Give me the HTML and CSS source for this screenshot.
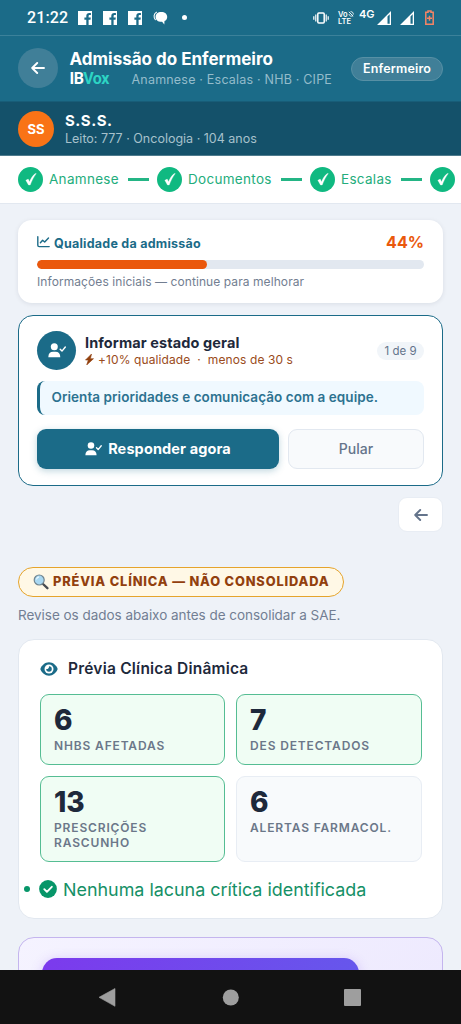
FILE: index.html
```html
<!DOCTYPE html>
<html lang="pt-BR">
<head>
<meta charset="utf-8">
<title>Admissão do Enfermeiro</title>
<link rel="stylesheet" href="styles.css">
</head>
<body>
<svg class="defs" width="0" height="0">
  <symbol id="fb" viewBox="0 0 14 14"><path fill="#fff" fill-rule="evenodd" d="M0 0h14v14h-3.400V8.800h1.900l.3-2.200h-2.200V5.200c0-.7.3-1.100 1.100-1.100h1.200V2.100c-.4 0-.9-.1-1.600-.1C9.400 2 8.300 3.100 8.300 4.900v1.700H6.400v2.200h1.900V14H0z"/></symbol>
  <symbol id="signal" viewBox="0 0 14 14"><path fill="#fff" fill-rule="evenodd" d="M14 0v14H0zM12.700 3.200L10.500 5.500v7.200h2.200z"/></symbol>
  <symbol id="arrow" viewBox="0 0 14 12"><path d="M13 6H1.500M6.200 1L1.200 6l5 5" fill="none" stroke="currentColor" stroke-width="1.900" stroke-linecap="round" stroke-linejoin="round"/></symbol>
  <symbol id="check" viewBox="0 0 12 13"><path d="M.8 7.300l2.400-1.200 1.300 2.600C5.900 5.300 7.800 2.300 10.300.6h1C8.700 4 6.900 7.700 5.200 12H3.500z" fill="#fff" stroke="#fff" stroke-width=".3"/></symbol>
  <symbol id="user" viewBox="0 0 18 15"><circle cx="6.300" cy="3.800" r="3.500" fill="#fff"/><path d="M.3 14.200c0-3.600 2-5.400 4.700-5.400h2.600c2.700 0 4.700 1.800 4.700 5.400z" fill="#fff"/><path d="M12.200 6.200l1.800 1.900L17.300 4" fill="none" stroke="#fff" stroke-width="1.400" stroke-linecap="round" stroke-linejoin="round"/></symbol>
</svg>
<div class="statusbar">
  <span class="clock">21:22</span>
  <svg class="fb"><use href="#fb"/></svg>
  <svg class="fb"><use href="#fb"/></svg>
  <svg class="fb"><use href="#fb"/></svg>
  <svg class="chat" viewBox="0 0 15 14"><path d="M2.600 9C.2 6.500.6 2.600 3.800 1" fill="none" stroke="#fff" stroke-width="1.100"/><path fill="#fff" d="M8.300 1c3.500 0 5.900 2 5.900 4.900 0 1.900-1 3.300-2.700 4.200l-.2 3.300-2.200-2.600c-3.800.3-6.500-1.700-6.500-4.900C2.600 3 4.800 1 8.300 1z"/></svg>
  <i class="more"></i>
  <span class="grow"></span>
  <svg class="vibrate" viewBox="0 0 16 12"><rect x="4.800" y="1" width="6.400" height="10" rx="1" fill="none" stroke="#fff" stroke-width="1.500"/><path d="M2.800 2.500v7M.8 4.200v3.600M13.200 2.500v7M15.200 4.200v3.600" stroke="#fff" stroke-width="1.200"/></svg>
  <span class="volte"><span>Vo<svg viewBox="0 0 6 6"><path d="M.8.8l4.400 4.400M1 3.200C1.500 5 3 5.500 4.800 5M2.500.7C4.500.6 5.500 1.800 5.200 3.600" fill="none" stroke="#fff" stroke-width=".9"/></svg></span><span>LTE</span></span>
  <span class="fourg">4G</span>
  <svg class="signal"><use href="#signal"/></svg>
  <svg class="signal second"><use href="#signal"/></svg>
  <svg class="battery" viewBox="0 0 9 15"><path d="M3 1h3v1.300h2.200v11.900H.8V2.300H3z" fill="none" stroke="#f58465" stroke-width="1.500"/><path d="M4.500 5.700v5M2 8.200h5" stroke="#f58465" stroke-width="1.500"/></svg>
</div>
<header class="header">
  <div class="back"><svg class="arrow"><use href="#arrow"/></svg></div>
  <div class="titles">
    <div class="title"><span>Admissão do Enfermeiro</span></div>
    <div class="subtitle"><b class="brand">IB<em>Vox</em></b><span class="trail">Anamnese · Escalas · NHB · CIPE</span></div>
  </div>
  <div class="role"><span>Enfermeiro</span></div>
</header>
<section class="patient">
  <div class="avatar">SS</div>
  <div><div class="pname"><span>S.S.S.</span></div><div class="pinfo"><span>Leito: 777 · Oncologia · 104 anos</span></div></div>
</section>
<nav class="steps">
  <i class="dot"><svg><use href="#check"/></svg></i><span class="s1">Anamnese</span><i class="line"></i>
  <i class="dot"><svg><use href="#check"/></svg></i><span class="s2">Documentos</span><i class="line"></i>
  <i class="dot"><svg><use href="#check"/></svg></i><span class="s3">Escalas</span><i class="line"></i>
  <i class="dot"><svg><use href="#check"/></svg></i>
</nav>
<main class="content">
  <section class="quality">
    <div class="qhead">
      <svg class="chart" viewBox="0 0 13 12"><path d="M.8.8v8.400c0 .9.500 1.400 1.400 1.400h10M3.400 6.700l2.200-2.500 2.100 1.900 3.800-4" fill="none" stroke="currentColor" stroke-width="1.400" stroke-linecap="round" stroke-linejoin="round"/></svg>
      <span class="qtitle">Qualidade da admissão</span><span class="grow"></span><span class="pct">44%</span>
    </div>
    <div class="bar"><div class="fill" style="width:44%"></div></div>
    <div class="qnote"><span>Informações iniciais — continue para melhorar</span></div>
  </section>
  <section class="task">
    <div class="thead">
      <div class="ticon"><svg><use href="#user"/></svg></div>
      <div class="ttext">
        <div class="ttitle"><span>Informar estado geral</span></div>
        <div class="tmeta"><svg viewBox="0 0 9 11"><path d="M6.500 0L.5 6h2.800L1.700 11 8.500 4.700H5.400z" fill="currentColor" stroke="currentColor" stroke-width=".6" stroke-linejoin="round"/></svg><span>+10% qualidade &nbsp;·&nbsp; menos de 30 s</span></div>
      </div>
      <div class="count"><span>1 de 9</span></div>
    </div>
    <div class="hint"><span>Orienta prioridades e comunicação com a equipe.</span></div>
    <div class="actions">
      <button class="primary"><svg><use href="#user"/></svg><span>Responder agora</span></button>
      <button class="skip"><span>Pular</span></button>
    </div>
  </section>
  <button class="prev"><svg class="arrow"><use href="#arrow"/></svg></button>
  <div class="preview-pill">
    <svg viewBox="0 0 16 16"><path d="M10 10l4.400 4.200" stroke="#484b50" stroke-width="2.300" stroke-linecap="round"/><circle cx="6.200" cy="6" r="5" fill="#a9d8f2" stroke="#71858f" stroke-width="1.200"/><path d="M3.400 5.500C3.700 4 4.700 3.100 6 2.900" stroke="#e9f8ff" stroke-width="1.200" fill="none"/></svg>
    <span>PRÉVIA CLÍNICA — NÃO CONSOLIDADA</span>
  </div>
  <p class="review"><span>Revise os dados abaixo antes de consolidar a SAE.</span></p>
  <section class="clinical">
    <div class="chead"><svg viewBox="0 0 18 14"><path d="M9 .3C5 .3 1.800 3.200.3 7c1.500 3.800 4.700 6.700 8.700 6.700s7.200-2.900 8.700-6.700C16.200 3.200 13 .3 9 .3z" fill="#1b6b88"/><circle cx="9" cy="7" r="4.500" fill="#fff"/><path d="M9 4.200A2.800 2.800 0 1 1 6.200 7c1.700.3 3-1 2.800-2.800z" fill="#1b6b88"/></svg><span>Prévia Clínica Dinâmica</span></div>
    <div class="stats">
      <div class="stat on"><b>6</b><span class="label">NHBS AFETADAS</span></div>
      <div class="stat on"><b>7</b><span class="label">DES DETECTADOS</span></div>
      <div class="stat on"><b>13</b><span class="label">PRESCRIÇÕES<br>RASCUNHO</span></div>
      <div class="stat"><b>6</b><span class="label">ALERTAS FARMACOL.</span></div>
    </div>
    <div class="gap-ok"><i class="bullet"></i><svg viewBox="0 0 18 18"><circle cx="9" cy="9" r="8.900" fill="#079669"/><path d="M5.300 9.200l2.600 2.600 4.900-5" fill="none" stroke="#fff" stroke-width="1.900" stroke-linecap="round" stroke-linejoin="round"/></svg><span>Nenhuma lacuna crítica identificada</span></div>
  </section>
  <section class="ai"><div class="aibtn"></div></section>
</main>
<footer class="navbar">
  <svg viewBox="0 0 461 54"><path d="M115 18.500v17.800L99 27.300z" fill="#9e9e9e" stroke="#9e9e9e" stroke-linejoin="round" stroke-width=".6"/><circle cx="230.800" cy="27.500" r="8" fill="#9e9e9e"/><rect x="344" y="19" width="17" height="17" rx="1" fill="#9e9e9e"/></svg>
</footer>
</body>
</html>
```
FILE: styles.css
```css
* { box-sizing: border-box; }
html, body { margin: 0; height: 1024px; overflow: hidden; }
body { width: 461px; display: flex; flex-direction: column; background: #eef2f8; font-family: Inter, "Noto Sans", sans-serif; color: #1e293b; }
svg { display: block; flex: none; }
span, b { white-space: nowrap; }
button { font: inherit; margin: 0; padding: 0; }
.defs { position: absolute; }
.grow { flex: 1; }

.statusbar { height: 36px; flex: none; display: flex; align-items: center; background: #1b6b88; border-bottom: 1px solid #3c819a; padding: 0 27px 0 27px; color: #fff; font-family: Roboto, sans-serif; }
.clock { font-size: 16px; font-weight: 500; width: 51px; letter-spacing: .1px; }
.fb { width: 14px; height: 14px; margin-right: 11px; }
.chat { width: 15px; height: 14px; }
.more { width: 5px; height: 5px; border-radius: 50%; background: #fff; margin-left: 14px; }
.vibrate { width: 16px; height: 12px; margin-right: 9px; }
.volte { display: flex; flex-direction: column; width: 21px; font: 600 7.500px/7px Inter, sans-serif; }
.volte > span { display: flex; }
.volte svg { width: 6px; height: 6px; }
.fourg { font: 600 11px/12px Inter, sans-serif; margin-bottom: 7px; width: 18px; }
.signal { width: 14px; height: 14px; }
.signal.second { margin: 0 11px 0 9px; }
.battery { width: 9px; height: 15px; }

.header { height: 66px; flex: none; display: flex; align-items: center; background: #1b6b88; padding: 0 18px; border-bottom: 1px solid #185d78; color: #fff; }
.back { width: 40px; height: 40px; border-radius: 50%; background: #407f98; display: grid; place-items: center; margin: 0 11.500px 1px 0; }
.arrow { width: 14px; height: 12px; }
.titles { flex: 1; padding-bottom: 1px; }
.title { font-size: 17px; font-weight: 700; line-height: 22px; }
.subtitle { display: flex; align-items: center; height: 19px; }
.brand { font: 700 16px/18px Roboto, sans-serif; letter-spacing: -.5px; width: 62px; }
.brand em { font-style: normal; color: #2dd4c4; }
.trail { font-size: 12.500px; color: #94bccb; letter-spacing: .2px; padding-top: 1px; }
.role { width: 92px; height: 24px; border-radius: 12px; border: 1px solid #5790a5; background: #407f98; display: grid; place-items: center; font-size: 12.500px; font-weight: 600; letter-spacing: .15px; }

.patient { height: 54px; flex: none; display: flex; align-items: center; background: #14516a; border-bottom: 1px solid #4e7b8d; padding: 0 18px; color: #fff; }
.avatar { width: 36px; height: 36px; border-radius: 50%; background: #f97316; display: grid; place-items: center; font-size: 13px; font-weight: 700; margin-right: 11px; }
.pname { font-size: 15px; line-height: 18px; font-weight: 700; padding-top: 1px; letter-spacing: .5px; }
.pinfo { font-size: 12.500px; line-height: 16px; color: #a7c1cc; padding-top: 1px; }

.steps { height: 48px; flex: none; display: flex; align-items: center; background: #fff; border-bottom: 1px solid #e2e8f0; padding: 0 0 1px 18px; font-size: 13.500px; letter-spacing: .3px; color: #23ad7c; }
.steps span { margin: 0 9px 0 6px; }
.s1 { width: 70px; } .s2 { width: 84px; } .s3 { width: 51px; }
.dot { width: 25px; height: 25px; flex: none; border-radius: 50%; background: #10b981; display: grid; place-items: center; }
.dot svg { width: 12px; height: 13px; }
.line { width: 21px; height: 3px; flex: none; background: #24b585; margin-right: 8px; }

.content { flex: 1; min-height: 0; overflow: hidden; display: flex; flex-direction: column; padding: 16px 18px 0; }
.content > * { flex: none; }
.quality { height: 83px; background: #fff; border-radius: 14px; box-shadow: 0 1px 5px rgba(15,23,42,.09); padding: 12px 19px 0; }
.qhead { display: flex; align-items: center; height: 20px; color: #1b6b88; }
.chart { width: 13px; height: 12px; margin-right: 4px; }
.qtitle { font-size: 12.500px; font-weight: 700; letter-spacing: .24px; padding-top: 2px; }
.pct { font-size: 16px; font-weight: 700; color: #ea580c; }
.bar { height: 9px; border-radius: 5px; background: #e2e8f0; margin-top: 8px; overflow: hidden; }
.fill { height: 9px; border-radius: 5px; background: #ea580c; }
.qnote { font-size: 12px; line-height: 16px; letter-spacing: .08px; color: #727e91; margin-top: 5px; }

.task { margin-top: 12px; height: 171px; background: #fff; border: 1.500px solid #1b6b88; border-radius: 15px; padding: 15px 18px; }
.thead { display: flex; align-items: center; height: 39px; }
.ticon { width: 39px; height: 39px; border-radius: 50%; background: #1b6b88; display: grid; place-items: center; margin-right: 9px; }
.ticon svg { width: 18px; height: 15px; }
.ttext { flex: 1; padding-bottom: 1px; }
.ttitle { font-size: 14.500px; line-height: 19px; font-weight: 700; letter-spacing: .1px; }
.tmeta { display: flex; align-items: center; font-size: 12px; line-height: 16px; letter-spacing: .1px; color: #9a4b20; }
.tmeta svg { width: 9px; height: 11px; margin-right: 4px; color: #92400e; }
.count { width: 47px; height: 18px; border-radius: 9px; background: #f1f5f9; display: grid; place-items: center; font-size: 11.500px; color: #64748b; }
.hint { height: 34px; margin-top: 11px; border-radius: 8px; border-left: 3px solid #1b6b88; background: #f0f9ff; display: flex; align-items: center; padding: 0 0 2px 11.500px; font-size: 13.500px; font-weight: 600; letter-spacing: .05px; color: #2c7290; }
.actions { display: flex; gap: 9px; margin-top: 14px; height: 40px; }
.primary { width: 242px; border: 0; border-radius: 9px; background: #1b6b88; color: #fff; font-size: 14.500px; font-weight: 700; letter-spacing: .12px; display: flex; align-items: center; justify-content: center; gap: 6px; box-shadow: 0 2px 7px rgba(27,107,136,.28); padding-bottom: 1px; }
.primary svg { width: 17px; height: 14px; }
.skip { flex: 1; border: 1px solid #e2e8f0; border-radius: 9px; background: #f8fafc; color: #64748b; font-size: 14px; font-weight: 500; padding-bottom: 1px; }
.prev { align-self: flex-end; width: 45px; height: 35px; margin-top: 11px; border: 1px solid #e8edf4; border-radius: 9px; background: #fff; color: #64748b; display: grid; place-items: center; }

.preview-pill { align-self: flex-start; width: 326px; height: 30px; margin-top: 35px; border: 1.500px solid #e5a42c; border-radius: 15px; background: #fff8e6; display: flex; align-items: center; padding: 0 0 1px 14px; gap: 4px; color: #92400e; font-size: 12.800px; font-weight: 800; letter-spacing: .85px; }
.preview-pill svg { width: 16px; height: 16px; }
.review { margin: 8px 0 0; font-size: 13.500px; line-height: 20px; letter-spacing: -.03px; color: #727e93; }
.clinical { margin-top: 14px; height: 280px; background: #fff; border: 1px solid #e2e8f0; border-radius: 16px; padding: 18px 20px 0 21px; }
.chead { display: flex; align-items: center; gap: 10px; height: 21px; font-size: 15.500px; font-weight: 600; letter-spacing: .22px; }
.chead svg { width: 18px; height: 14px; }
.stats { display: grid; grid-template-columns: 185px 186px; grid-template-rows: 71px 86px; gap: 11px; margin-top: 15px; }
.stat { display: flex; flex-direction: column; border: 1px solid #e8edf4; border-radius: 9px; background: #f8fafc; padding: 9px 0 0 13px; }
.stat.on { background: #f0fdf4; border-color: #55bd93; }
.stat b { font-size: 28px; line-height: 32px; font-weight: 800; }
.label { font-size: 12px; line-height: 15px; font-weight: 600; letter-spacing: .85px; color: #6b7789; margin-top: 2px; }
.gap-ok { display: flex; align-items: center; height: 24px; margin: 15px 0 0 -16.500px; font-size: 17.900px; color: #159066; }
.bullet { width: 6px; height: 6px; border-radius: 50%; background: #079669; margin-right: 9.500px; }
.gap-ok svg { width: 18px; height: 18px; margin-right: 6px; }

.ai { margin-top: 18px; height: 90px; border: 1.500px solid #c4b5ee; border-radius: 16px; background: linear-gradient(135deg, #f5f3ff, #ede9fe); padding: 20px 23px; }
.aibtn { width: 317px; height: 50px; border-radius: 15px; background: linear-gradient(110deg, #7c3aed, #6558ec); box-shadow: 0 2px 12px rgba(124,58,237,.25); }

.navbar { height: 54px; flex: none; background: #121212; }
.navbar svg { width: 461px; height: 54px; }
```
